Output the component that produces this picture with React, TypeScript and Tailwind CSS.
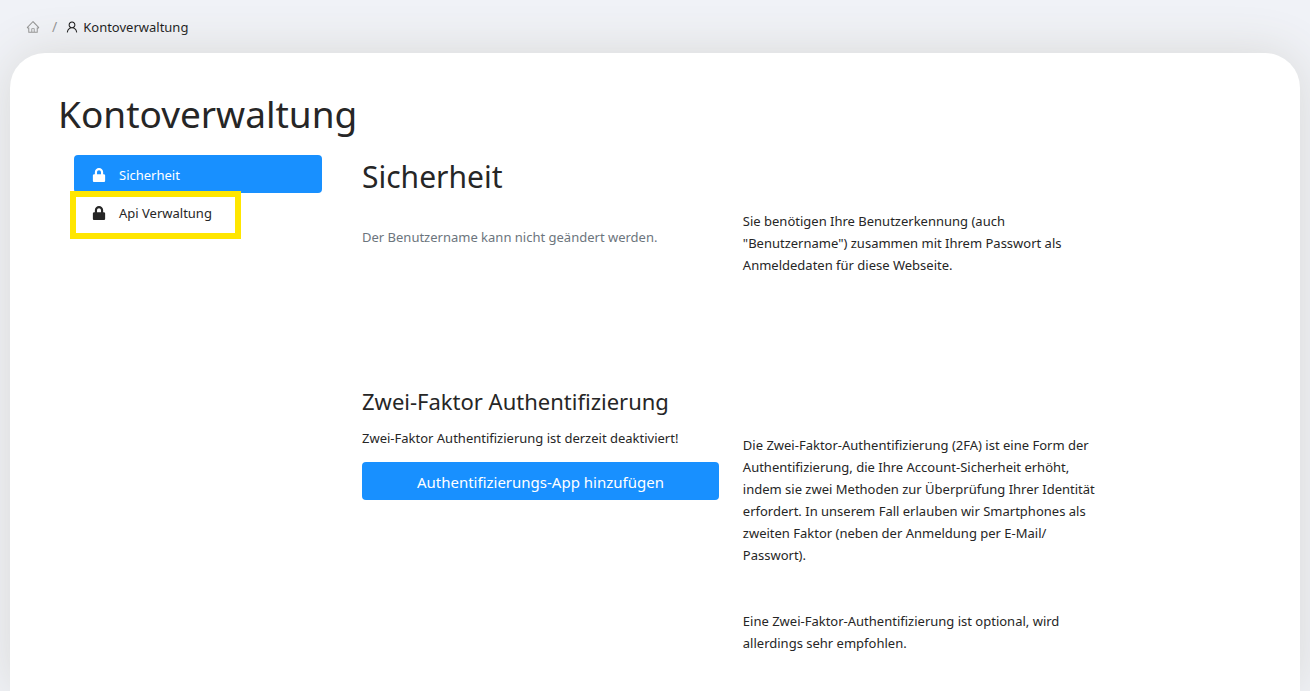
import { AiOutlineHome, AiOutlineUser } from 'react-icons/ai';
import { FaLock } from 'react-icons/fa';

export default function App() {
  return (
    <div className="min-h-screen flex flex-col bg-[#f0f2f7] px-[10px] font-['Noto_Sans',sans-serif] text-[13px] leading-[22px] text-[#262626]">
      {/* Breadcrumb */}
      <nav aria-label="Breadcrumb" className="h-[53px] flex items-center gap-2 px-4">
        <a href="#home" aria-label="Startseite" className="mr-1 text-[#8c8c8c]">
          <AiOutlineHome size={14} />
        </a>
        <span className="text-sm text-[#8c8c8c]">/</span>
        <a href="#konto" className="flex items-center gap-1 text-black">
          <AiOutlineUser size={14} />
          Kontoverwaltung
        </a>
      </nav>

      <main className="flex-1 rounded-t-[35px] bg-white px-12 pt-10 pb-8 shadow-[0_0_50px_#d8d8d6]">
        <h1 className="text-[37px] leading-[42px]">Kontoverwaltung</h1>

        <div className="mt-5 flex gap-10 pl-4">
          {/* Tabs */}
          <nav aria-label="Konto" className="w-[248px] shrink-0">
            <a href="#sicherheit" aria-current="page" className="flex h-[38px] items-center gap-[13px] rounded bg-[#1890ff] px-[18px] pt-0.5 text-white">
              <FaLock size={14} />
              Sicherheit
            </a>
            <a href="#api" className="relative flex h-[38px] items-center gap-[13px] rounded px-[18px] pt-0.5">
              <FaLock size={14} />
              Api Verwaltung
              <span className="absolute -left-1 -top-0.5 h-12 w-[171px] border-[6px] border-[#ffe600]" />
            </a>
          </nav>

          <div className="min-w-0 flex-1">
            <h2 className="text-[30px] leading-[44px]">Sicherheit</h2>

            <section className="mt-[11px] grid min-h-44 grid-cols-12 gap-x-6">
              <p className="col-span-5 pt-4 text-[#6c757d]">Der Benutzername kann nicht geändert werden.</p>
              <p className="col-span-5">
                Sie benötigen Ihre Benutzerkennung (auch "Benutzername") zusammen mit Ihrem Passwort als Anmeldedaten für diese Webseite.
              </p>
            </section>

            <section className="grid grid-cols-12 gap-x-6">
              <div className="col-span-5">
                <h3 className="text-[22px] leading-[30px]">Zwei-Faktor Authentifizierung</h3>
                <p className="mt-[11px]">Zwei-Faktor Authentifizierung ist derzeit deaktiviert!</p>
                <button type="button" className="mt-[13px] h-[38px] w-full rounded bg-[#1890ff] pt-0.5 text-[15px] text-white">
                  Authentifizierungs-App hinzufügen
                </button>
              </div>
              <div className="col-span-5 pt-12">
                <p>
                  Die Zwei-Faktor-Authentifizierung (2FA) ist eine Form der Authentifizierung, die Ihre Account-Sicherheit erhöht, indem sie zwei Methoden zur Überprüfung Ihrer Identität erfordert. In unserem Fall erlauben wir Smartphones als zweiten Faktor (neben der Anmeldung per E-Mail/<wbr />Passwort).
                </p>
                <p className="mt-11">Eine Zwei-Faktor-Authentifizierung ist optional, wird allerdings sehr empfohlen.</p>
              </div>
            </section>
          </div>
        </div>
      </main>
    </div>
  );
}
